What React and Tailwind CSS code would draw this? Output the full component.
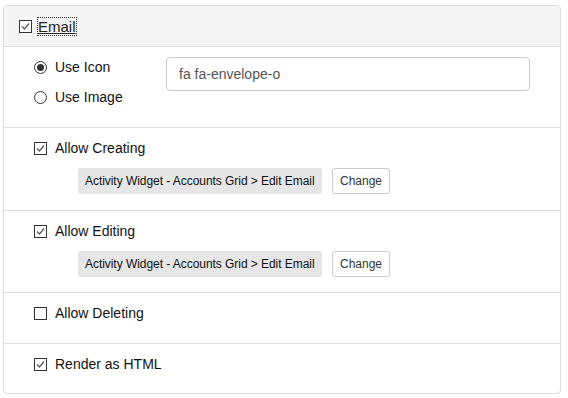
import React from 'react'

function CheckBox({ checked }) {
    return (
        <svg width="13" height="13" viewBox="0 0 13 13" className="shrink-0">
            <rect x="0.5" y="0.5" width="12" height="12" fill="#fff" stroke="#333" />
            {checked && <path d="M3 6.5 5.5 9 10 3.5" fill="none" stroke="#555" strokeWidth="1.2" />}
        </svg>
    )
}

function Radio({ checked }) {
    return (
        <svg width="13" height="13" viewBox="0 0 13 13" className="shrink-0">
            <circle cx="6.5" cy="6.5" r="6" fill="#fff" stroke="#333" />
            {checked && <circle cx="6.5" cy="6.5" r="3.5" fill="#333" />}
        </svg>
    )
}

function Option({ checked, label }) {
    return (
        <label className="flex items-center gap-[8px] h-[20px] text-[14px] text-[#111]">
            <CheckBox checked={checked} />
            <span>{label}</span>
        </label>
    )
}

function Target() {
    return (
        <div className="flex items-center gap-[10px] ml-[44px] mt-[10px]">
            <span className="h-[26px] w-[244px] flex items-center px-[7px] rounded-[3px] bg-[#e6e6e6] text-[12px] tracking-[-0.05px] whitespace-nowrap text-[#111]">
                Activity Widget - Accounts Grid &gt; Edit Email
            </span>
            <button className="h-[26px] w-[58px] rounded-[3px] border border-[#ccc] bg-white text-[12px] text-[#333]">
                Change
            </button>
        </div>
    )
}

export default function App() {
    return (
        <div className="w-[568px] h-[398px] bg-white pt-[5px] pl-[3px]" style={{ fontFamily: '"Liberation Sans", Arial, sans-serif' }}>
            <div className="w-[558px] h-[389px] border border-[#ddd] rounded-[4px] overflow-hidden flex flex-col">
                {/* header */}
                <div className="h-[41px] bg-[#f5f5f5] border-b border-[#ddd] flex items-center pl-[15px] gap-[6px]">
                    <CheckBox checked />
                    <span className="text-[15px] text-[#222] underline outline-1 outline-dotted outline-[#333] leading-[17px]">Email</span>
                </div>

                {/* icon / image */}
                <div className="flex items-start pl-[30px] pt-[10px] pb-[20px] border-b border-[#ddd]">
                    <div className="flex flex-col gap-[10px] w-[132px]">
                        <label className="flex items-center gap-[8px] h-[20px] text-[14px] text-[#111]">
                            <Radio checked />
                            <span>Use Icon</span>
                        </label>
                        <label className="flex items-center gap-[8px] h-[20px] text-[14px] text-[#111]">
                            <Radio />
                            <span>Use Image</span>
                        </label>
                    </div>
                    <input
                        readOnly
                        value="fa fa-envelope-o"
                        className="w-[364px] h-[34px] border border-[#ccc] rounded-[4px] px-[12px] text-[14px] text-[#555] outline-none"
                    />
                </div>

                <div className="pl-[30px] pt-[10px] pb-[16px] border-b border-[#ddd]">
                    <Option checked label="Allow Creating" />
                    <Target />
                </div>

                <div className="pl-[30px] pt-[10px] pb-[15px] border-b border-[#ddd]">
                    <Option checked label="Allow Editing" />
                    <Target />
                </div>

                <div className="pl-[30px] pt-[10px] pb-[20px] border-b border-[#ddd]">
                    <Option label="Allow Deleting" />
                </div>

                <div className="pl-[30px] pt-[10px] pb-[19px]">
                    <Option checked label="Render as HTML" />
                </div>
            </div>
        </div>
    )
}
